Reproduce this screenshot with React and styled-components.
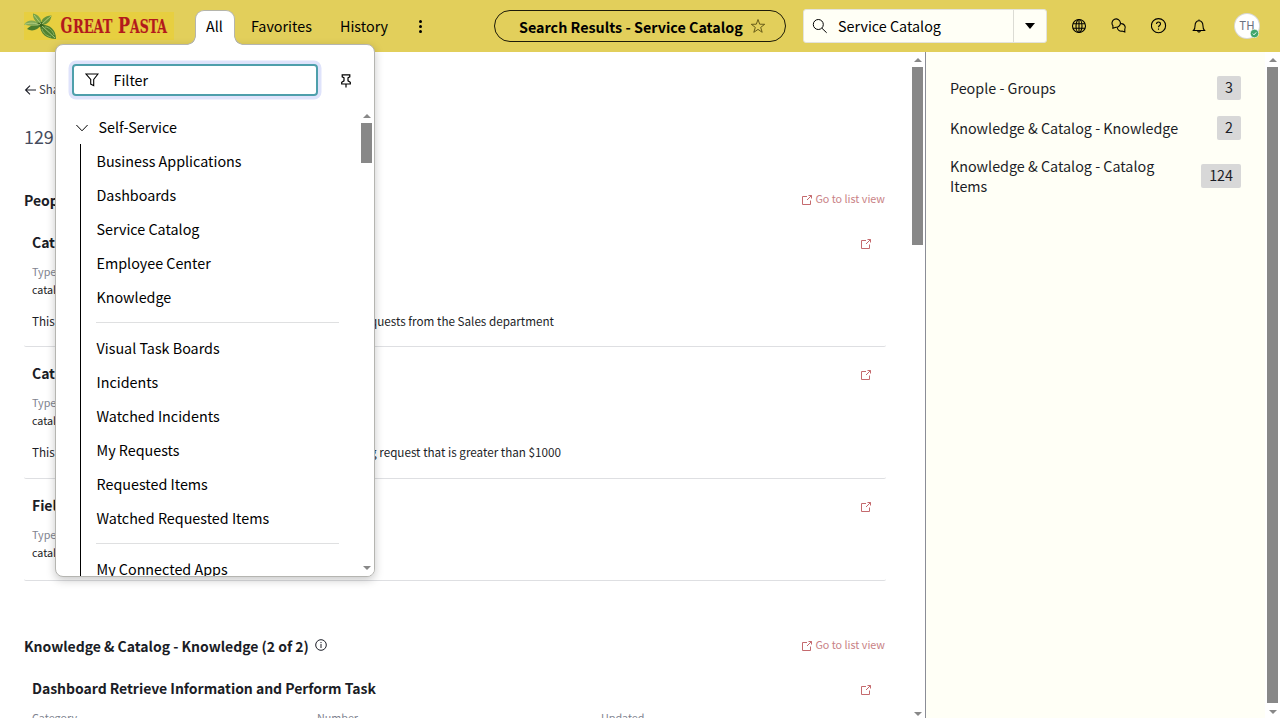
import React from "react";
import styled, { createGlobalStyle } from "styled-components";

const Global = createGlobalStyle`
  * { box-sizing: border-box; }
  body {
    margin: 0;
    background: #fff;
    overflow: hidden;
    font-family: "Noto Sans CJK SC", "Noto Sans", sans-serif;
    font-size: 14.33px;
    color: #1b1d26;
  }
  svg { flex: none; }
`;

const Page = styled.div`
  position: relative;
  width: 1280px;
  height: 718px;
  display: flex;
  flex-direction: column;
  overflow: hidden;
  white-space: nowrap;
`;

/* ---------- header ---------- */
const Header = styled.header`
  height: 52px;
  flex: none;
  display: flex;
  align-items: center;
  background: #e2cf5b;
  color: #000;
  padding-left: 24px;
`;
const Logo = styled.svg`
  width: 150px;
  height: 28px;
  flex: none;
`;
const Nav = styled.nav`
  display: flex;
  align-self: stretch;
  align-items: center;
  margin-left: 21px;
  width: 299px;
  flex: none;
  line-height: 24px;
`;
const Tab = styled.span`
  width: 40px;
  height: 35px;
  align-self: flex-start;
  margin-top: 10px;
  position: relative;
  z-index: 3;
  padding: 3px 0 0 10px;
  background: #fff;
  border: 1px solid #b5b5ac;
  border-bottom: 0;
  border-radius: 9px 9px 0 0;
  &::before, &::after {
    content: "";
    position: absolute;
    bottom: 0;
    width: 9px;
    height: 9px;
  }
  &::before {
    left: -9px;
    background: radial-gradient(circle at 0 0, transparent 7.5px, #b5b5ac 8px, #b5b5ac 8.5px, #fff 9px);
  }
  &::after {
    right: -9px;
    background: radial-gradient(circle at 100% 0, transparent 7.5px, #b5b5ac 8px, #b5b5ac 8.5px, #fff 9px);
  }
`;
const NavLink = styled.span`
  width: ${(p) => p.$w}px;
  margin-left: ${(p) => p.$gap}px;
`;
const Dots = styled.span`
  display: flex;
  flex-direction: column;
  gap: 2px;
  margin-left: 30.5px;
  i { width: 3px; height: 3px; border-radius: 50%; background: #000; }
`;
const Pill = styled.div`
  width: 292px;
  height: 32px;
  flex: none;
  border: 1px solid #1c1a08;
  border-radius: 16px;
  display: flex;
  align-items: center;
  justify-content: space-between;
  line-height: 29px;
  padding: 0 19px 0 24px;
  font-weight: 700;
`;
const Search = styled.div`
  width: 244px;
  height: 34px;
  flex: none;
  margin-left: 17px;
  display: flex;
  align-items: center;
  background: #fffff6;
  border: 1px solid #e3e3dc;
  border-radius: 3px;
`;
const SearchText = styled.span`
  flex: 1;
  margin-left: 10px;
  height: 32px;
  line-height: 31px;
`;
const Caret = styled.span`
  width: 33px;
  height: 32px;
  border-left: 1px solid #dcdcd4;
  display: flex;
  align-items: center;
  justify-content: center;
`;
const Tools = styled.div`
  display: flex;
  align-items: center;
  margin-left: 24px;
  gap: 24px;
`;
const Avatar = styled.div`
  position: relative;
  width: 24px;
  height: 24px;
  margin-left: 4px;
  border-radius: 50%;
  background: #fff;
  box-shadow: 0 0 0 1px #d9d9d9;
  color: #6b7280;
  font-size: 11.5px;
  line-height: 22px;
  text-align: center;
`;
const Status = styled.svg`
  position: absolute;
  right: 0;
  bottom: 0;
  width: 9px;
  height: 9px;
`;

/* ---------- scrollbars ---------- */
const Track = styled.div`
  width: 15px;
  flex: none;
  display: flex;
  flex-direction: column;
  align-items: center;
  justify-content: space-between;
  background: #fff;
  padding: ${(p) => p.$pad || "6px 0 2px"};
`;
const Arrow = styled.i`
  border: 4px solid transparent;
  border-top-width: ${(p) => (p.$down ? 4 : 0)}px;
  border-bottom-width: ${(p) => (p.$down ? 0 : 4)}px;
  border-${(p) => (p.$down ? "top" : "bottom")}-color: #888;
`;
const Thumb = styled.div`
  width: 11px;
  height: ${(p) => p.$h}px;
  margin: ${(p) => p.$top}px 0 auto;
  background: #888;
`;

/* ---------- results ---------- */
const Body = styled.div`
  flex: 1;
  min-height: 0;
  display: flex;
`;
const Results = styled.main`
  width: 910px;
  flex: none;
  overflow: hidden;
  padding: 27px 24px 0 24px;
`;
const Back = styled.div`
  display: flex;
  align-items: center;
  gap: 3px;
  height: 20px;
  line-height: 20px;
  font-size: 11.4px;
  color: #3c404c;
  svg { position: relative; top: 1px; }
`;
const Count = styled.div`
  margin-top: 21px;
  height: 32px;
  line-height: 32px;
  font-size: 17.9px;
  color: #464c5e;
`;
const GroupHead = styled.div`
  display: flex;
  align-items: center;
  height: 24px;
  line-height: 24px;
  margin-top: ${(p) => p.$top}px;
  margin-bottom: 4px;
  font-weight: 700;
  font-size: 14px;
  letter-spacing: -0.02px;
  svg { margin: -2px 0 0 6.5px; }
`;
const ListLink = styled.span`
  margin: 0 1px 0 auto;
  display: flex;
  align-items: center;
  gap: 2px;
  font-size: 10.76px;
  font-weight: 400;
  letter-spacing: 0;
  color: #c98286;
  position: relative;
  top: -1px;
  svg { margin: 1px 0 0; }
`;
const Card = styled.section`
  height: ${(p) => p.$h}px;
  border-bottom: 1px solid #dedfe2;
  border-radius: 2px;
  padding: 14px 14px 0 8px;
`;
const CardTitle = styled.div`
  display: flex;
  justify-content: space-between;
  align-items: center;
  height: 24px;
  line-height: 24px;
  font-weight: 700;
  font-size: 14px;
  letter-spacing: -0.04px;
  svg { margin-top: 4px; }
`;
const Fields = styled.div`
  display: grid;
  grid-template-columns: 285px 284px 1fr;
  margin-top: 9px;
`;
const Label = styled.div`
  font-size: 10.76px;
  line-height: 18px;
  color: #80838f;
`;
const Value = styled.div`
  font-size: 10.76px;
  line-height: 18px;
`;
const Desc = styled.div`
  width: ${(p) => p.$w}px;
  display: flex;
  justify-content: space-between;
  margin-top: 12px;
  font-size: 11.68px;
  line-height: 20px;
`;

/* ---------- sidebar ---------- */
const Side = styled.aside`
  margin-left: auto;
  width: 340px;
  border-left: 1px solid #8b8d96;
  background: #fffff6;
  padding: 24px 24px 0;
  display: flex;
  flex-direction: column;
  gap: 16px;
  white-space: normal;
`;
const SideRow = styled.div`
  display: flex;
  align-items: center;
  justify-content: space-between;
  line-height: 20px;
`;
const SideName = styled.span`
  max-width: 232px;
`;
const Badge = styled.span`
  height: 24px;
  line-height: 22px;
  padding: 0 8px;
  background: #d8d8d8;
  border-radius: 2px;
`;

/* ---------- navigator popover ---------- */
const Menu = styled.div`
  position: absolute;
  z-index: 2;
  left: 55px;
  top: 44px;
  width: 320px;
  height: 533px;
  display: flex;
  flex-direction: column;
  background: #fff;
  border: 1px solid #b5b5b1;
  border-radius: 8px;
  box-shadow: 0 3px 10px rgba(0, 0, 0, 0.22);
  color: #000;
  overflow: hidden;
`;
const FilterRow = styled.div`
  display: flex;
  align-items: center;
  padding: 19px 21px 0 16px;
  justify-content: space-between;
`;
const FilterBox = styled.div`
  width: 246px;
  height: 32px;
  border: 2px solid #4e9fab;
  border-radius: 4px;
  box-shadow: 0 0 0 3.5px #dfe3fb;
  display: flex;
  align-items: center;
  gap: 14.5px;
  line-height: 28px;
  padding-left: 11px;
`;
const Scroller = styled.div`
  flex: 1;
  min-height: 0;
  margin-top: 12px;
  display: flex;
  justify-content: space-between;
`;
const Tree = styled.div`
  width: 283px;
  overflow: hidden;
`;
const TreeHead = styled.div`
  display: flex;
  align-items: center;
  gap: 10.5px;
  height: 36px;
  padding: 2px 0 0 20px;
  line-height: 32px;
  svg { margin-top: 1px; }
`;
const Branch = styled.div`
  margin-left: 24px;
  border-left: 1px solid #000;
  padding-left: 15px;
`;
const Leaf = styled.div`
  height: 34px;
  line-height: 34px;
  padding-left: 0.5px;
`;
const Rule = styled.hr`
  margin: 8px 0;
  border: 0;
  height: 1px;
  background: #dfe0e1;
`;

/* ---------- icons ---------- */
const Ico = ({ s = 16, w = 1, vb = 16, children, ...r }) => (
  <svg width={s} height={s} viewBox={`0 0 ${vb} ${vb}`} fill="none" stroke="currentColor" strokeWidth={w} {...r}>{children}</svg>
);
const OpenIcon = () => (
  <Ico s={12} vb={12} color="#c56a6e"><path d="M6 2.5H1.5v8h8V6.5M7.5 1.5h3v3M10.5 1.5L6 6" /></Ico>
);
const GlobeIcon = () => (
  <Ico w={1.1}><circle cx="8" cy="8" r="6.5" /><ellipse cx="8" cy="8" rx="3" ry="6.5" /><path d="M2 5.7h12M2 10.3h12M8 1.5v13" /></Ico>
);
const ChatIcon = () => (
  <Ico w={1.1}>
    <path d="M1.900 10.200V7.700A4.200 4.200 0 1 1 4.900 9.300L1.900 10.200Z" />
    <path d="M10.100 5.600a3.900 3.900 0 0 1 3.700 5.700v2.700l-2.800-.9a3.900 3.900 0 0 1-4.700-3.600" />
  </Ico>
);
const HelpIcon = () => (
  <Ico w={1.1} viewBox="0.5 0.3 16 16"><circle cx="8" cy="8" r="7.1" /><path d="M6 6.4C6 3.6 10 3.7 10 6.2c0 1.6-2 1.6-2 3.3M8 10.7v1.3" /></Ico>
);
const BellIcon = () => (
  <Ico w={1.1}><path d="M2.5 12.5h11c-1.3-1.3-1.6-2.3-1.6-5.2C11.9 4.6 10.4 2.8 8 2.8S4.1 4.6 4.1 7.3c0 2.9-.3 3.9-1.6 5.2ZM6.6 12.8c.1 1.7 2.7 1.7 2.8 0M8 1.5v1.3" /></Ico>
);
const InfoIcon = () => (
  <Ico s={12} vb={12}><circle cx="6" cy="6" r="5.3" /><path d="M6 5v4M6 3v1.1" /></Ico>
);

const LogoArt = () => (
  <Logo viewBox="0 0 150 28">
    <rect width="150" height="28" fill="#e7cf40" />
    <path d="M3 17c3-4 8-5 14-4-3 5-9 7-14 4Z" fill="#4b7d2d" />
    <path d="M0 12.500C4 7 11 7 17 13 11 14.500 5 14 0 12.500Z" fill="#82a957" />
    <path d="M9 1.500c5 1 9 5 8.500 11.500C12 11 8.500 7 9 1.500Z" fill="#77a347" />
    <path d="M17.500 13c-1-6 3-9 10-9.500C27 9 23 13 17.500 13Z" fill="#679439" />
    <path d="M16 13c9-1 16 4 16 14-9 0-16-5-16-14Z" fill="#4f8130" />
    <path d="M13 11l5-1 2 4-4 1Z" fill="#3a651f" />
    <path d="M1 12.300c6-2 10-1 15 .5M10 3l7 9M27 4l-9 8M18 14l13 12" stroke="#bdd388" strokeWidth=".8" fill="none" />
    <path d="M21 15c4 0 8 4 9 8M18 17c1 4 5 7 9 8M21 9l3-3" stroke="#93b864" strokeWidth=".9" fill="none" />
    <g fill="#b3191c" stroke="#b3191c" strokeWidth=".15" fontFamily="'DejaVu Serif Condensed', 'DejaVu Serif', serif" fontWeight="700">
      <text x="36.5" y="21.2" fontSize="22" textLength="12" lengthAdjust="spacingAndGlyphs">G</text>
      <text x="49" y="21.2" fontSize="18" textLength="39.500" lengthAdjust="spacingAndGlyphs">REAT</text>
      <text x="94" y="21.2" fontSize="22" textLength="12" lengthAdjust="spacingAndGlyphs">P</text>
      <text x="106" y="21.2" fontSize="18" textLength="37" lengthAdjust="spacingAndGlyphs">ASTA</text>
    </g>
  </Logo>
);

const groupsFound = [
  { title: "Catalog Request Approvers for Sales", h: 131, w: 522, a: "This group is responsible for approving", b: "requests from the Sales department" },
  { title: "Catalog Request Approvers > $1000", h: 132, w: 529, a: "This group is responsible for approving", b: "a catalog request that is greater than $1000" },
  { title: "Field Services", h: 102 },
];
const menuTop = ["Business Applications", "Dashboards", "Service Catalog", "Employee Center", "Knowledge"];
const menuMid = ["Visual Task Boards", "Incidents", "Watched Incidents", "My Requests", "Requested Items", "Watched Requested Items"];
const counts = [
  ["People - Groups", 3],
  ["Knowledge & Catalog - Knowledge", 2],
  ["Knowledge & Catalog - Catalog Items", 124],
];

export default function App() {
  return (
    <Page>
      <Global />
      <Header>
        <LogoArt />
        <Nav>
          <Tab>All</Tab>
          <NavLink $w={61} $gap={16}>Favorites</NavLink>
          <NavLink $w={48} $gap={28}>History</NavLink>
          <Dots><i /><i /><i /></Dots>
        </Nav>
        <Pill>
          Search Results - Service Catalog
          <Ico w={0.9} color="#5a5012"><path d="M8 1.500l1.700 4.700 5 .1-4 3.100 1.500 4.900L8 11.400l-4.200 2.900 1.500-4.900-4-3.100 5-.1Z" /></Ico>
        </Pill>
        <Search>
          <Ico width="24" height="16" viewBox="-8 0 24 16"><circle cx="6.3" cy="6.5" r="5" /><path d="M10 10.3l4.700 4.500" /></Ico>
          <SearchText>Service Catalog</SearchText>
          <Caret><svg width="10" height="6" viewBox="0 0 10 6"><path d="M0 0h10L5 6z" /></svg></Caret>
        </Search>
        <Tools>
          <GlobeIcon /><ChatIcon /><HelpIcon /><BellIcon />
          <Avatar>TH
            <Status viewBox="0 0 9 9"><circle cx="4.5" cy="4.5" r="4.2" fill="#3fa66b" stroke="#fff" strokeWidth=".6" /><path d="M2.8 4.6l1.2 1.2 2.2-2.4" stroke="#fff" fill="none" /></Status>
          </Avatar>
        </Tools>
      </Header>

      <Body>
        <Results>
          <Back>
            <Ico s={12} vb={12} w={1.1} color="#1b1d26"><path d="M12 6H1.5M6 1.7L1.6 6 6 10.3" /></Ico>
            Share
          </Back>
          <Count>129 results</Count>
          <GroupHead $top={36}>
            People - Groups (3 of 3)
            <InfoIcon />
            <ListLink><OpenIcon />Go to list view</ListLink>
          </GroupHead>
          {groupsFound.map((g) => (
            <Card key={g.title} $h={g.h}>
              <CardTitle>{g.title}<OpenIcon /></CardTitle>
              <Fields><div><Label>Type</Label><Value>catalog</Value></div></Fields>
              {g.a && <Desc $w={g.w}><span>{g.a}</span><span>{g.b}</span></Desc>}
            </Card>
          ))}
          <GroupHead $top={53}>
            Knowledge &amp; Catalog - Knowledge (2 of 2)
            <InfoIcon />
            <ListLink><OpenIcon />Go to list view</ListLink>
          </GroupHead>
          <Card $h={132}>
            <CardTitle>Dashboard Retrieve Information and Perform Task<OpenIcon /></CardTitle>
            <Fields><Label>Category</Label><Label>Number</Label><Label>Updated</Label></Fields>
          </Card>
        </Results>
        <Track><Arrow /><Thumb $h={178} $top={5} /><Arrow $down /></Track>
        <Side>
          {counts.map(([name, n]) => (
            <SideRow key={name}><SideName>{name}</SideName><Badge>{n}</Badge></SideRow>
          ))}
        </Side>
        <Track $pad="6px 0 4px"><Arrow /><Thumb $h={636} $top={5} /><Arrow $down /></Track>
      </Body>

      <Menu>
        <FilterRow>
          <FilterBox>
            <Ico s={14} vb={14} w={1.1}><path d="M1 1h12L8.7 6.5v6.2l-3-1.6V6.5Z" /></Ico>
            Filter
          </FilterBox>
          <Ico s={14} vb={14} w={1.2} viewBox="0 -1 14 14" overflow="visible"><path d="M3.2 .8h7.600v2L9 3.800v3l2.300 1.500v1.700H2.700v-1.700L5 6.800v-3L3.200 2.800ZM7 10V13.500" /></Ico>
        </FilterRow>
        <Scroller>
          <Tree>
            <TreeHead>
              <Ico width="12" height="8" viewBox="0 0 12 8"><path d="M.4 1L6 6.8 11.6 1" /></Ico>
              Self-Service
            </TreeHead>
            <Branch>
              {menuTop.map((t) => <Leaf key={t}>{t}</Leaf>)}
              <Rule />
              {menuMid.map((t) => <Leaf key={t}>{t}</Leaf>)}
              <Rule />
              <Leaf>My Connected Apps</Leaf>
            </Branch>
          </Tree>
          <Track $pad="6px 0 6px"><Arrow /><Thumb $h={40} $top={5} /><Arrow $down /></Track>
        </Scroller>
      </Menu>
    </Page>
  );
}
